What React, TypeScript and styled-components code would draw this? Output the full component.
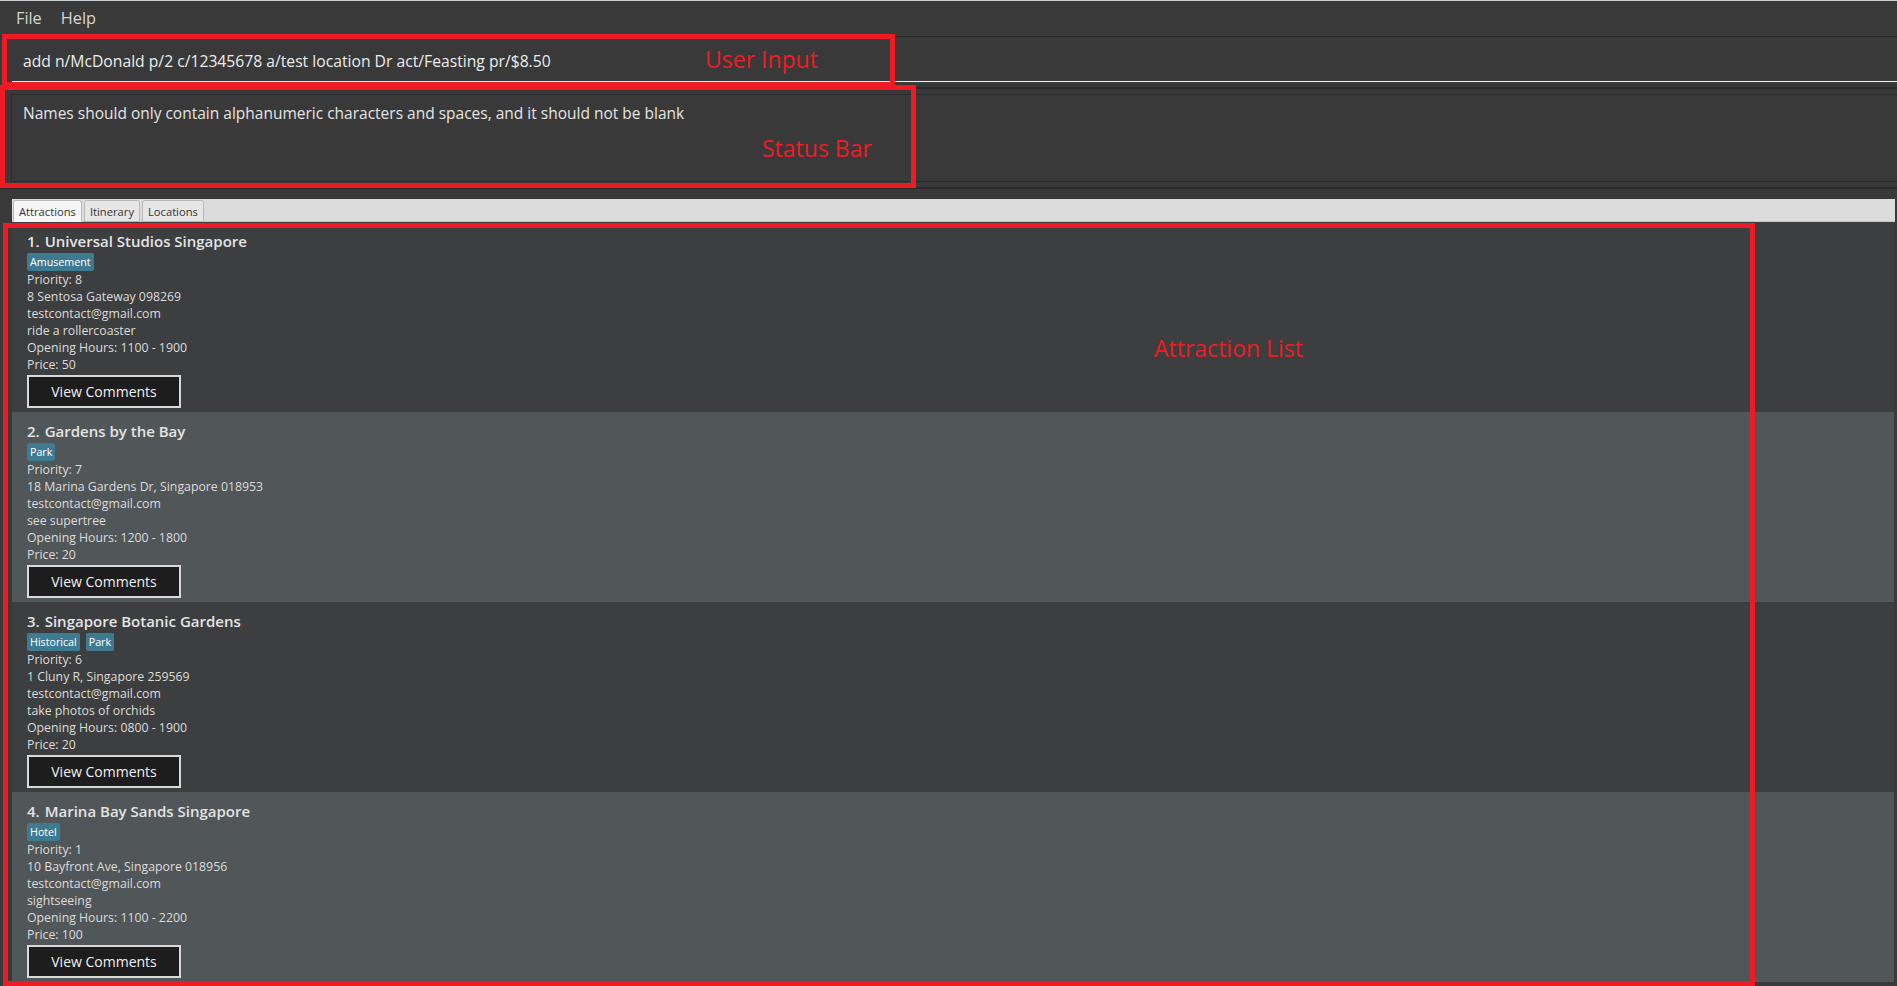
import React from "react";
import styled, { createGlobalStyle } from "styled-components";

const GlobalStyle = createGlobalStyle`
  html, body {
    margin: 0;
    padding: 0;
    background: #393939;
    font-family: "Open Sans", "Noto Sans", sans-serif;
    overflow: hidden;
  }
  * { box-sizing: border-box; }
`;

const Window = styled.div`
  position: relative;
  width: 1897px;
  height: 986px;
  overflow: hidden;
  background: #393939;
  border-top: 1px solid #c9cdd0;
  display: flex;
  flex-direction: column;
`;

const MenuBar = styled.div`
  height: 36px;
  display: flex;
  align-items: center;
  gap: 19px;
  padding-left: 16px;
  padding-bottom: 1px;
  border-bottom: 1px solid #2a2a2a;
  background: #3a3a3a;
`;

const MenuItem = styled.span`
  font-size: 16.3px;
  color: #d6d6d6;
`;

const CommandPane = styled.div`
  padding-left: 12px;
`;

const CommandField = styled.div`
  height: 45px;
  display: flex;
  align-items: center;
  padding-left: 11px;
  padding-top: 3px;
  border-bottom: 1px solid #f2f2f2;
  font-size: 15.7px;
  color: #ececec;
  white-space: nowrap;
`;

const Rule = styled.div<{ $h: number; $mt: number }>`
  height: ${(p) => p.$h}px;
  margin-top: ${(p) => p.$mt}px;
  background: #2a2a2a;
`;

const StatusPane = styled.div`
  margin-left: 11px;
  height: 88px;
  border: 1px solid #2c2c2c;
  border-right: none;
  padding: 7px 0 0 11px;
  font-size: 15.5px;
  color: #e4e4e4;
  white-space: nowrap;
`;

const TabHeader = styled.div`
  margin-top: 10px;
  margin-left: 12px;
  margin-right: 2px;
  height: 23px;
  background: #dcdcdc;
  display: flex;
  align-items: flex-end;
  gap: 2px;
  padding-left: 1px;
  border-bottom: 1px solid #c4c4c4;
`;

const Tab = styled.div<{ $active?: boolean }>`
  height: 22px;
  margin-bottom: -1px;
  padding: 0 5px;
  display: flex;
  align-items: center;
  font-size: 11.2px;
  color: #333;
  background: ${(p) => (p.$active ? "#f6f6f6" : "#e6e6e6")};
  border: 1px solid #b9b9b9;
  border-bottom: ${(p) => (p.$active ? "1px solid #f6f6f6" : "1px solid #b9b9b9")};
  border-radius: 3px 3px 0 0;
`;

const List = styled.div`
  margin-left: 12px;
  margin-right: 3px;
  display: flex;
  flex-direction: column;
`;

const Card = styled.div<{ $alt: boolean }>`
  height: 190px;
  background: ${(p) => (p.$alt ? "#515658" : "#3c3e3f")};
  padding: 8px 0 0 15px;
  display: flex;
  flex-direction: column;
  align-items: flex-start;
`;

const TitleRow = styled.div`
  height: 21px;
  display: flex;
  align-items: center;
  gap: 5px;
  font-size: 15px;
  font-weight: 600;
  color: #e4e4e4;
`;

const Tags = styled.div`
  margin-top: 2px;
  display: flex;
  gap: 6px;
  height: 18px;
`;

const Tag = styled.span`
  height: 18px;
  padding: 0 3px;
  display: flex;
  align-items: center;
  background: #3e7b91;
  border-radius: 2px;
  font-size: 10.7px;
  color: #ffffff;
`;

const Detail = styled.div`
  height: 17px;
  line-height: 17px;
  font-size: 12.3px;
  color: #dcdcdc;
  white-space: nowrap;
`;

const CommentButton = styled.button`
  margin-top: 2px;
  width: 154px;
  height: 33px;
  background: #1d1d1d;
  border: 2px solid #d9d9d9;
  color: #f0f0f0;
  font-family: "Open Sans", "Noto Sans", sans-serif;
  font-size: 14px;
  padding: 0;
`;

const Annotation = styled.div<{ $l: number; $t: number; $w: number; $h: number }>`
  position: absolute;
  left: ${(p) => p.$l}px;
  top: ${(p) => p.$t}px;
  width: ${(p) => p.$w}px;
  height: ${(p) => p.$h}px;
  border: 5px solid #ed1c24;
  pointer-events: none;
`;

const AnnotationLabel = styled.span<{ $l: number; $t: number }>`
  position: absolute;
  left: ${(p) => p.$l}px;
  top: ${(p) => p.$t}px;
  font-size: 23px;
  line-height: 30px;
  color: #ed1c24;
  white-space: nowrap;
  pointer-events: none;
`;

type Attraction = {
  name: string;
  tags: string[];
  priority: number;
  address: string;
  email: string;
  activity: string;
  hours: string;
  price: number;
};

const attractions: Attraction[] = [
  {
    name: "Universal Studios Singapore",
    tags: ["Amusement"],
    priority: 8,
    address: "8 Sentosa Gateway 098269",
    email: "testcontact@gmail.com",
    activity: "ride a rollercoaster",
    hours: "1100 - 1900",
    price: 50,
  },
  {
    name: "Gardens by the Bay",
    tags: ["Park"],
    priority: 7,
    address: "18 Marina Gardens Dr, Singapore 018953",
    email: "testcontact@gmail.com",
    activity: "see supertree",
    hours: "1200 - 1800",
    price: 20,
  },
  {
    name: "Singapore Botanic Gardens",
    tags: ["Historical", "Park"],
    priority: 6,
    address: "1 Cluny R, Singapore 259569",
    email: "testcontact@gmail.com",
    activity: "take photos of orchids",
    hours: "0800 - 1900",
    price: 20,
  },
  {
    name: "Marina Bay Sands Singapore",
    tags: ["Hotel"],
    priority: 1,
    address: "10 Bayfront Ave, Singapore 018956",
    email: "testcontact@gmail.com",
    activity: "sightseeing",
    hours: "1100 - 2200",
    price: 100,
  },
];

export default function App() {
  return (
    <>
      <GlobalStyle />
      <Window>
        <MenuBar>
          <MenuItem>File</MenuItem>
          <MenuItem>Help</MenuItem>
        </MenuBar>
        <CommandPane>
          <CommandField>
            add n/McDonald p/2 c/12345678 a/test location Dr act/Feasting pr/$8.50
          </CommandField>
        </CommandPane>
        <Rule $h={2} $mt={5} />
        <Rule $h={0} $mt={5} />
        <StatusPane>
          Names should only contain alphanumeric characters and spaces, and it should not be blank
        </StatusPane>
        <Rule $h={2} $mt={5} />
        <TabHeader>
          <Tab $active>Attractions</Tab>
          <Tab>Itinerary</Tab>
          <Tab>Locations</Tab>
        </TabHeader>
        <List>
          {attractions.map((a, i) => (
            <Card key={a.name} $alt={i % 2 === 1}>
              <TitleRow>
                <span>{i + 1}.</span>
                <span>{a.name}</span>
              </TitleRow>
              <Tags>
                {a.tags.map((t) => (
                  <Tag key={t}>{t}</Tag>
                ))}
              </Tags>
              <Detail>Priority: {a.priority}</Detail>
              <Detail>{a.address}</Detail>
              <Detail>{a.email}</Detail>
              <Detail>{a.activity}</Detail>
              <Detail>Opening Hours: {a.hours}</Detail>
              <Detail>Price: {a.price}</Detail>
              <CommentButton>View Comments</CommentButton>
            </Card>
          ))}
        </List>

        <Annotation $l={2} $t={33} $w={893} $h={53} />
        <AnnotationLabel $l={705} $t={43}>User Input</AnnotationLabel>
        <Annotation $l={0} $t={84} $w={916} $h={103} />
        <AnnotationLabel $l={762} $t={132}>Status Bar</AnnotationLabel>
        <Annotation $l={3} $t={222} $w={1752} $h={763} />
        <AnnotationLabel $l={1154} $t={332}>Attraction List</AnnotationLabel>
      </Window>
    </>
  );
}
